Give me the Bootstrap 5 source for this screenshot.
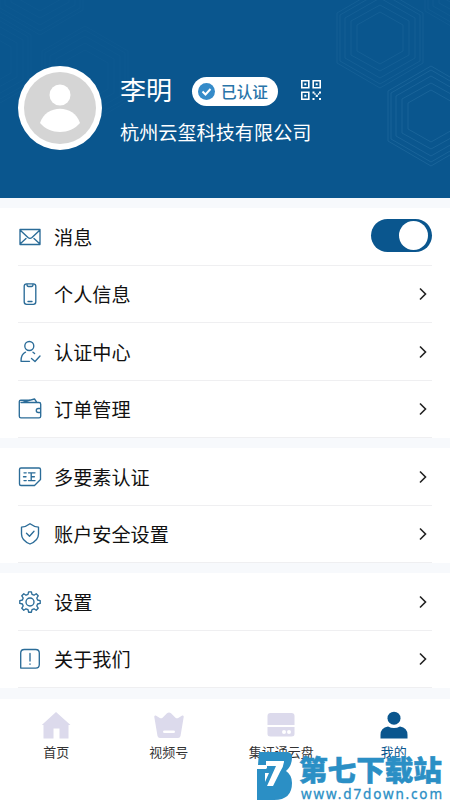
<!DOCTYPE html>
<html lang="zh-CN">
<head>
<meta charset="utf-8">
<meta name="viewport" content="width=device-width, initial-scale=1">
<title>我的</title>
<link href="https://cdn.jsdelivr.net/npm/bootstrap@5.3.0/dist/css/bootstrap.min.css" rel="stylesheet">
<style>
:root{--brand:#0a568e}
body{font-family:"Noto Sans CJK SC",sans-serif;width:450px;height:800px;overflow:hidden;background:#f7f9fc;color:#111}
.profile{height:198px;background:var(--brand);padding:66px 0 0 18px}
.hexes{left:0;top:0}
.avatar{width:84px;height:84px}
.who{margin-left:18px;padding-top:4px}
.user-name{font-size:26px;line-height:38px;width:72px}
.company{font-size:19.15px;line-height:28px;margin-top:10px}
.verified{width:86px;height:29px;background:#fff;color:#2874a9;font-size:15.7px;font-weight:500;line-height:29px;padding-left:6px;margin-top:4px}
.verified svg{margin-right:6px}
.qr{margin-left:23px;margin-top:2px}
.menu{margin-top:10px;background:#fff;padding:0 18px}
.menu-row{height:57.5px;border-bottom:1px solid #efeff1;font-size:19.15px;line-height:28px;padding-top:.6px}
.menu-row .ico{width:24px;height:24px;margin-right:12px;fill:none;stroke:#2b6c98;stroke-width:1.35;stroke-linecap:round;stroke-linejoin:round}
.chev{width:10px;height:14px;margin-right:4px;fill:none;stroke:#222;stroke-width:1.6}
.toggle{width:61px;height:33px;background:var(--brand);padding:2px;margin-top:-2px}
.knob{width:29px;height:29px;background:#fff;margin-right:2px}
.tabs{margin-top:11px;height:101px;background:#fff;padding-top:11px}
.tab-item{width:112.6px;font-size:13px;line-height:20px;color:#333}
.tab-item svg{width:30px;height:30px;fill:#dcdaec;margin-bottom:2px}
.tab-item.on{color:var(--brand)}
.tab-item.on svg{fill:var(--brand)}
.stamp{left:256px;top:751px;width:194px;height:49px}
</style>
</head>
<body>
<header class="profile d-flex position-relative">
  <svg class="hexes position-absolute" width="450" height="198" fill="none" stroke="#2c75a8">
    <defs><g id="hex"><path d="M0-50 43-25V25L0 50-43 25V-25Z"/><path d="M0-46 40-23V23L0 46-40 23V-23Z"/><path d="M0-40 35-20V20L0 40-35 20V-20Z"/><path d="M0-33 29-17V17L0 33-29 17V-17Z"/><path d="M0-26 23-13V13L0 26-23 13V-13Z"/></g></defs>
    <use href="#hex" x="380" y="38" opacity=".3"/><use href="#hex" x="431" y="116" opacity=".45"/><use href="#hex" x="468" y="-14" opacity=".18"/>
    <use href="#hex" x="85" y="76" opacity=".09"/><use href="#hex" x="-12" y="60" opacity=".1"/><use href="#hex" x="40" y="-15" opacity=".1"/>
  </svg>
  <svg class="avatar position-relative" viewBox="0 0 84 84"><circle cx="42" cy="42" r="42" fill="#fff"/><circle cx="42" cy="42" r="36" fill="#d5d5d5"/><circle cx="42" cy="29" r="10.5" fill="#fff"/><path d="M22 57C28 38 56 38 62 57 52 69 32 69 22 57Z" fill="#fff"/></svg>
  <div class="who position-relative text-white">
    <div class="d-flex align-items-center">
      <div class="user-name">李明</div>
      <div class="verified rounded-pill d-flex align-items-center text-nowrap"><svg width="17" height="17" viewBox="0 0 17 17"><circle cx="8.5" cy="8.5" r="8.5" fill="#358bc9"/><path d="m4.5 8.5 3 3 5-5.5" fill="none" stroke="#fff" stroke-width="2"/></svg>已认证</div>
      <svg class="qr" width="20" height="20" viewBox="0 0 20 20"><g fill="none" stroke="#fff" stroke-width="1.6"><path d="M.8.8h7v7h-7zM12.2.8h7v7h-7zM.8 12.2h7v7h-7z"/></g><path fill="#fff" d="M3.3 3.3h2v2h-2zM14.7 3.3h2v2h-2zM3.3 14.7h2v2h-2zM11.5 11.5h2v2h-2zM18 11.5h2v2h-2zM14.7 14.7h2.2v2.2h-2.2zM11.5 18h2v2h-2zM18 18h2v2h-2zM13.2 13.2h1.5v1.5h-1.5zM16.9 13.2h1.3v1.5h-1.3z"/></svg>
    </div>
    <div class="company">杭州云玺科技有限公司</div>
  </div>
</header>

<section class="menu">
  <div class="menu-row d-flex align-items-center"><svg class="ico" viewBox="0 0 24 24"><path d="M2 4.500h20v15H2zM2 5l8 7.500q2 1.700 4 0L22 5M2 19l6-5.500M22 19l-6-5.500"/></svg><span class="me-auto">消息</span><div class="toggle rounded-pill d-flex justify-content-end align-items-center"><span class="knob rounded-circle"></span></div></div>
  <div class="menu-row d-flex align-items-center"><svg class="ico" viewBox="0 0 24 24"><rect x="6.200" y="1.800" width="11.600" height="20.500" rx="2.500"/><path d="M9 2.500q0 2 1.500 2h3q1.500 0 1.500-2M10 19.500h4"/></svg><span class="me-auto">个人信息</span><svg class="chev" viewBox="0 0 10 14"><path d="m2 1.500 5.500 5.500L2 12.500"/></svg></div>
  <div class="menu-row d-flex align-items-center"><svg class="ico" viewBox="0 0 24 24"><circle cx="11.300" cy="6" r="4.500"/><path d="M7.500 12.200C4.500 13.500 3 17 3 21.300h8.500M15 12.200l1.600 1.300M13.500 18.500l3.500 3 5-5.500"/></svg><span class="me-auto">认证中心</span><svg class="chev" viewBox="0 0 10 14"><path d="m2 1.500 5.500 5.500L2 12.500"/></svg></div>
  <div class="menu-row d-flex align-items-center"><svg class="ico" viewBox="0 0 24 24"><path d="M3 5.500h18q1.700 0 1.700 1.700v12q0 1.700-1.700 1.700H3q-1.700 0-1.700-1.700V4.500q0-1.300 1.500-1.300h9M5 5.200l11.500-3.200 2.200 3.200M22.500 11.500h-2.200a2 2 0 0 0 0 4h2.200"/></svg><span class="me-auto">订单管理</span><svg class="chev" viewBox="0 0 10 14"><path d="m2 1.500 5.500 5.500L2 12.500"/></svg></div>
</section>

<section class="menu">
  <div class="menu-row d-flex align-items-center"><svg class="ico" viewBox="0 0 24 24"><path d="M3 3h18q1.500 0 1.500 1.500v10L16.500 20.500H3q-1.500 0-1.500-1.500V4.500Q1.500 3 3 3ZM6 7.800h2.200M5.500 11.700H8M6 15.600h2.200M10.500 7.800H17M13.200 7.800v7.800M13.200 11.700h3.200M10.500 15.600H17"/></svg><span class="me-auto">多要素认证</span><svg class="chev" viewBox="0 0 10 14"><path d="m2 1.500 5.500 5.500L2 12.500"/></svg></div>
  <div class="menu-row d-flex align-items-center"><svg class="ico" viewBox="0 0 24 24"><path d="M12 1.700q4 3 8.500 3.500V12q0 6.500-8.500 10Q3.500 18.500 3.500 12V5.200Q8 4.700 12 1.700ZM8.500 11.300l3 3 4.500-5"/></svg><span class="me-auto">账户安全设置</span><svg class="chev" viewBox="0 0 10 14"><path d="m2 1.500 5.500 5.500L2 12.500"/></svg></div>
</section>

<section class="menu">
  <div class="menu-row d-flex align-items-center"><svg class="ico" viewBox="0 0 24 24"><circle cx="12" cy="12" r="4"/><path d="M10.600 1.800h2.800l.6 2.600 2 .8 2.200-1.400 2 2L18.800 8l.8 2 2.600.6v2.800l-2.600.6-.8 2 1.400 2.200-2 2-2.200-1.400-2 .8-.6 2.600h-2.800l-.6-2.600-2-.8-2.200 1.400-2-2L5.200 16l-.8-2-2.600-.6v-2.800l2.600-.6.8-2-1.400-2.200 2-2L8 5.200l2-.8Z"/></svg><span class="me-auto">设置</span><svg class="chev" viewBox="0 0 10 14"><path d="m2 1.500 5.500 5.500L2 12.500"/></svg></div>
  <div class="menu-row d-flex align-items-center"><svg class="ico" viewBox="0 0 24 24"><path d="M6.300 2.500h11.400q3.600 0 3.600 3.600v11.400q0 3.600-3.600 3.600h-15V6.100q0-3.600 3.600-3.600ZM12 6.500v7.500M12 16.800v.4"/></svg><span class="me-auto">关于我们</span><svg class="chev" viewBox="0 0 10 14"><path d="m2 1.500 5.500 5.500L2 12.500"/></svg></div>
</section>

<nav class="tabs d-flex">
  <div class="tab-item d-flex flex-column align-items-center"><svg viewBox="0 0 30 30"><path d="M15 2 29.500 15H27.500v13.500H18.500V18.500h-6v10H2.500V15H.8Z"/></svg>首页</div>
  <div class="tab-item d-flex flex-column align-items-center"><svg viewBox="0 0 30 30"><path fill-rule="evenodd" d="M.3 7q-.3-2 1.500-1.500l4 2.500q1.500.8 2.700-.3l4.500-4.500q2-1.500 4 0l4.500 4.500q1.200 1.100 2.700.3l4-2.500q1.800-.5 1.500 1.500L26.500 26q-.5 2-2.500 2H6q-2 0-2.500-2ZM10.500 20.500q-1.500 0-1.500 1.200t1.500 1.200h9q1.500 0 1.500-1.200t-1.500-1.200Z"/></svg>视频号</div>
  <div class="tab-item d-flex flex-column align-items-center"><svg viewBox="0 0 30 30"><path fill-rule="evenodd" d="M4.500 3h21q3 0 3 3V15h-27V6q0-3 3-3ZM1.500 17h27v7q0 2.500-3 2.500h-21q-3 0-3-2.500ZM16 22a2 2 0 1 0 4 0 2 2 0 1 0-4 0ZM21 22a2 2 0 1 0 4 0 2 2 0 1 0-4 0Z"/></svg>集证通云盘</div>
  <div class="tab-item on d-flex flex-column align-items-center"><svg viewBox="0 0 30 30"><circle cx="15" cy="8.200" r="6.500"/><path d="M1.500 28.500V25q0-7.500 7.500-8.500 6 3 12 0 7.500 1 7.500 8.500v3.500Z"/></svg>我的</div>
</nav>

<svg class="stamp position-absolute" viewBox="0 0 194 49" fill="#2b8fc5">
  <path d="M3 1h29q4 1 4 5 0 9-6 14 6 4 6 12 0 17-18 17H1V18h9v-4H2Z"/>
  <path fill="#fff" d="M10 10h18q0 5-4 11l-7 14h-6l9-20H10Z"/>
  <path fill="#fff" d="M0 15h11v2.500H0ZM9 22h4l-4 9Z"/>
  <text x="43" y="29.500" font-size="28.700" font-weight="900" font-family="Noto Sans CJK SC, sans-serif" stroke="#2b8fc5" stroke-width=".5" textLength="143">第七下载站</text>
  <text x="45" y="47.800" font-size="13.500" font-family="Noto Sans, sans-serif" stroke="#2b8fc5" stroke-width=".3" textLength="141">www.d7down.com</text>
</svg>
<script src="https://cdn.jsdelivr.net/npm/bootstrap@5.3.0/dist/js/bootstrap.bundle.min.js"></script>
</body>
</html>
